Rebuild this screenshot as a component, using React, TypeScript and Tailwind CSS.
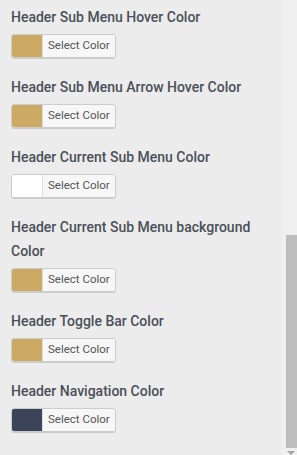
const fields = [
  { label: "Header Sub Menu Hover Color", color: "bg-[#cdaa63]" },
  { label: "Header Sub Menu Arrow Hover Color", color: "bg-[#cdaa63]" },
  { label: "Header Current Sub Menu Color", color: "bg-white" },
  { label: "Header Current Sub Menu background Color", color: "bg-[#cdaa63]" },
  { label: "Header Toggle Bar Color", color: "bg-[#cdaa63]" },
  { label: "Header Navigation Color", color: "bg-[#3b4458]" },
];

const ColorField = ({ label, color }: { label: string; color: string }) => (
  <div className="mb-[17px]">
    <p className="text-[14px] leading-[24px] font-medium text-[#4a5059]">{label}</p>
    <button className="mt-[5px] flex h-[24px] items-stretch overflow-hidden rounded-[3px] border border-[#ccc] shadow-[0_1px_0_#ccc]">
      <span className={`w-[30px] ${color}`} />
      <span className="flex items-center border-l border-[#ddd] bg-[#f7f7f7] px-[5px] text-[11.5px] text-[#555]">
        Select Color
      </span>
    </button>
  </div>
);

export default function App() {
  return (
    <div
      className="flex h-[455px] w-[297px] overflow-hidden bg-[#ececec]"
      style={{ fontFamily: "Roboto, 'Liberation Sans', sans-serif" }}
    >
      <div className="w-[271px] pl-[11px] pt-[5px]">
        {fields.map((f) => (
          <ColorField key={f.label} label={f.label} color={f.color} />
        ))}
      </div>
      <div className="ml-[11px] flex w-[15px] flex-col items-center bg-[#f0f0f0] pl-[3px]">
        <div className="mt-[235px] h-[213px] w-[11px] bg-[#bdbdbd]" />
        <div className="mt-[3px] h-0 w-0 border-x-[4px] border-t-[4px] border-x-transparent border-t-[#a3a3a3]" />
      </div>
    </div>
  );
}
